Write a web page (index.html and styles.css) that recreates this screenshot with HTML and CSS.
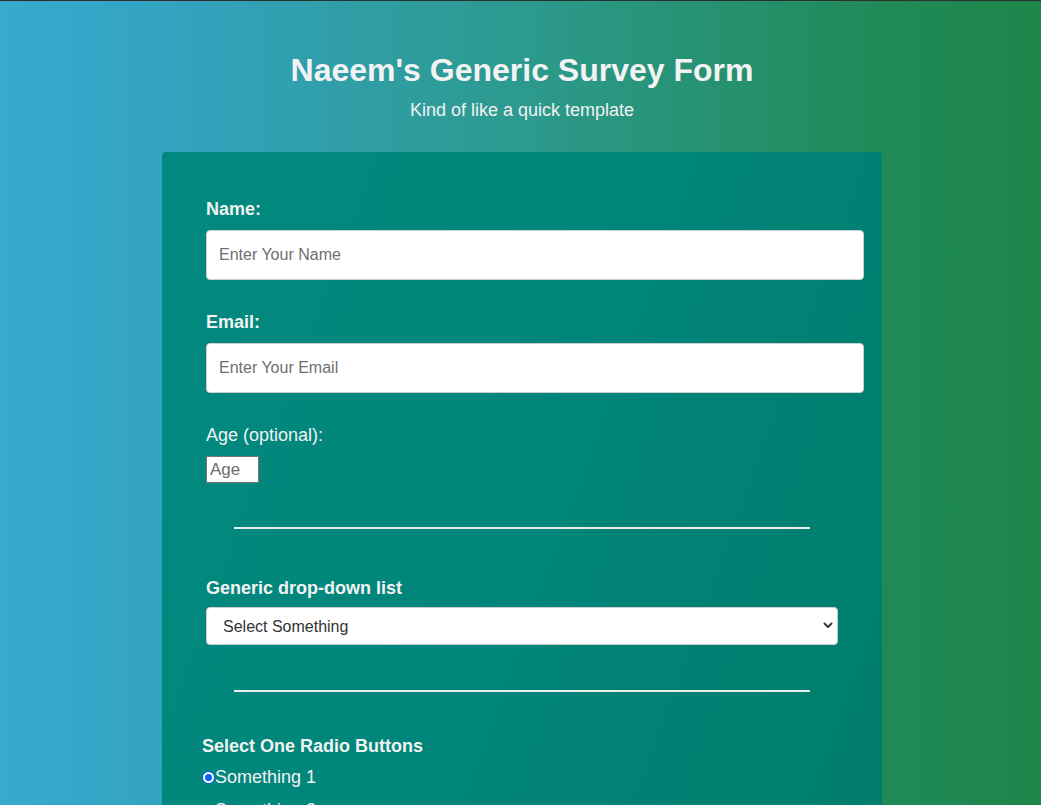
FILE: index.html
```html
<!DOCTYPE html>
<html lang="en">
<head>
<meta charset="utf-8">
<title>Naeem's Generic Survey Form</title>
<link rel="stylesheet" href="styles.css">
</head>
<body>
  <header class="header">
    <h1 class="title">Naeem's Generic Survey Form</h1>
    <p class="subtitle">Kind of like a quick template</p>
  </header>
  <main class="card">
    <form class="form">
      <div class="group">
        <label class="label strong" for="name">Name:</label>
        <input class="text-input" id="name" type="text" placeholder="Enter Your Name">
      </div>
      <div class="group">
        <label class="label strong" for="email">Email:</label>
        <input class="text-input" id="email" type="email" placeholder="Enter Your Email">
      </div>
      <div class="group">
        <label class="label" for="age">Age (optional):</label>
        <input class="age-input" id="age" type="number" placeholder="Age">
      </div>
      <hr class="rule">
      <div class="group">
        <label class="label label-tight strong" for="dropdown">Generic drop-down list</label>
        <div class="select-wrap">
          <select class="select" id="dropdown">
            <option>Select Something</option>
            <option>Option 1</option>
            <option>Option 2</option>
          </select>
          <svg class="chevron" width="10" height="7" viewBox="0 0 10 7"><path d="M1.5 1.5 L5 5 L8.5 1.5" fill="none" stroke="#3a3a3a" stroke-width="2" stroke-linecap="round" stroke-linejoin="round"/></svg>
        </div>
      </div>
      <hr class="rule rule-second">
      <div class="radio-group">
        <p class="label strong">Select One Radio Buttons</p>
        <label class="radio-row"><input class="radio" type="radio" name="r" checked>Something 1</label>
        <label class="radio-row"><input class="radio" type="radio" name="r">Something 2</label>
        <label class="radio-row"><input class="radio" type="radio" name="r">Something 3</label>
      </div>
    </form>
  </main>
</body>
</html>
```
FILE: styles.css
```css
* { box-sizing: border-box; }

html, body { margin: 0; }

body {
  min-height: 100vh;
  padding-left: 3px;
  border-top: 1px solid #2e2e2e;
  background: linear-gradient(to right, #37aacd 0%, #33a3c2 15%, #2c9a8e 50%, #208a57 85%, #1d864a 100%);
  font-family: "Liberation Sans", Arial, Helvetica, sans-serif;
  color: #f2f2f2;
}

.header {
  text-align: center;
  padding-top: 51px;
}

.title {
  margin: 0;
  font-size: 32px;
  font-weight: 700;
  line-height: 37px;
  color: #f3f3f3;
}

.subtitle {
  margin: 11px 0 0;
  font-size: 18px;
  line-height: 21px;
}

.card {
  width: 720px;
  margin: 31px auto 0;
  padding: 47px 18px 60px 44px;
  border-radius: 4px;
  background: linear-gradient(110deg, #02897f 0%, #01857a 50%, #007c6a 100%);
}

.form { display: flex; flex-direction: column; }

.group {
  display: flex;
  flex-direction: column;
  align-items: flex-start;
  margin-bottom: 32px;
}

.label {
  display: block;
  margin: 0 0 10px;
  font-size: 18px;
  line-height: 21px;
  font-weight: 400;
}

.label-tight { margin-bottom: 8px; }

.strong { font-weight: 700; }

.text-input {
  width: 100%;
  height: 50px;
  padding: 0 12px;
  border: 1px solid #c9cfd4;
  border-radius: 4px;
  background: #fff;
  font-family: inherit;
  font-size: 16px;
  color: #333;
}

.text-input::placeholder, .age-input::placeholder { color: #6f6f6f; }

.age-input {
  width: 53px;
  height: 27px;
  padding: 1px 3px;
  border: 1px solid #767676;
  border-radius: 0;
  background: #fff;
  font-family: inherit;
  font-size: 17px;
  color: #333;
}

.rule {
  width: 576px;
  height: 0;
  margin: 12px 0 49px 28px;
  border: none;
  border-top: 2px solid #ececec;
}

.rule-second { margin-top: 13px; margin-bottom: 44px; }

.select-wrap {
  position: relative;
  width: 632px;
}

.select {
  width: 100%;
  height: 38px;
  padding: 0 16px;
  border: 1px solid #c9cfd4;
  border-radius: 4px;
  background: #fff;
  -webkit-appearance: none;
  appearance: none;
  font-family: inherit;
  font-size: 16px;
  color: #333;
}

.chevron {
  position: absolute;
  right: 5px;
  top: 15px;
}

.radio-group {
  margin-left: -4px;
}

.radio-group .label { margin-bottom: 10px; }

.radio-row {
  display: flex;
  align-items: center;
  font-size: 18px;
  line-height: 21px;
  margin-bottom: 12px;
}

.radio {
  -webkit-appearance: none;
  appearance: none;
  width: 11px;
  height: 11px;
  margin: 0 1px 0 1px;
  border-radius: 50%;
  border: 2px solid #fff;
  background: #0a62f4;
  box-shadow: 0 0 0 1px #0a62f4;
}

.radio:not(:checked) {
  background: #fff;
  border-color: #888;
  box-shadow: none;
  border-width: 1px;
}
```
